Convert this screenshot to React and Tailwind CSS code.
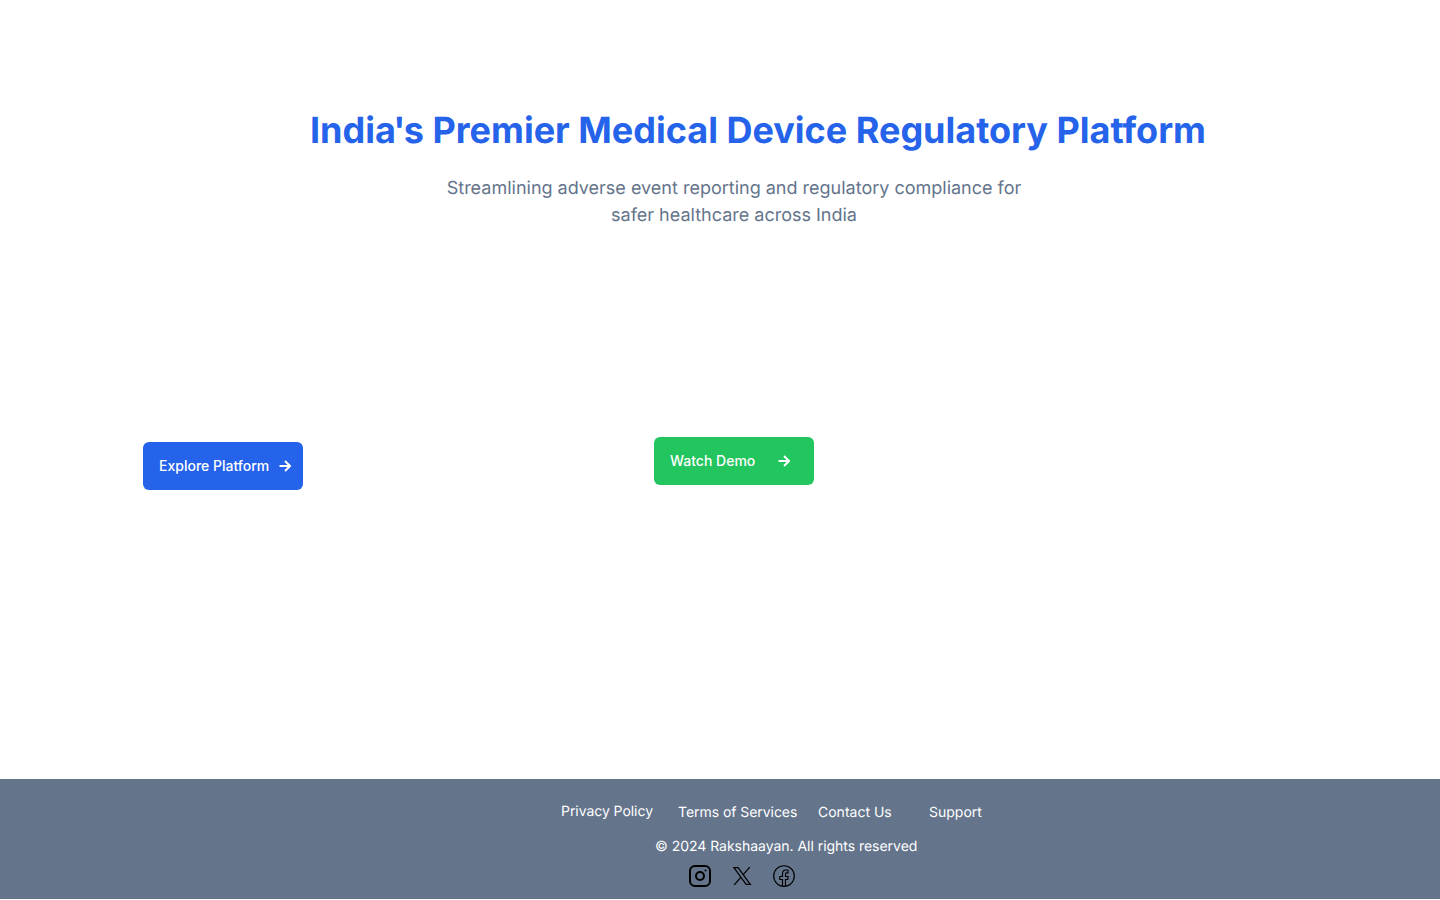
const Arrow = () => (
  <svg width="12" height="12" viewBox="0 0 12 12" fill="none" stroke="white" strokeWidth="2">
    <path d="M0.5 6H11M6 1L11 6L6 11" />
  </svg>
);

const Instagram = () => (
  <svg width="24" height="24" viewBox="0 0 24 24" fill="none" stroke="black" strokeWidth="2">
    <rect x="2" y="2" width="20" height="20" rx="5" />
    <circle cx="12" cy="12" r="4" />
    <circle cx="17.5" cy="6.5" r="1" fill="black" stroke="none" />
  </svg>
);

const XLogo = () => (
  <svg width="24" height="24" viewBox="0 0 24 24" fill="none" stroke="black" strokeWidth="1.25">
    <path d="M3.9 3.6H8.1L20.3 20.4H16.1ZM19.8 3.2L13 10.9M11 13.1L4.2 20.8" />
  </svg>
);

const Facebook = () => (
  <svg width="24" height="24" viewBox="0 0 24 24" fill="none" stroke="black" strokeWidth="1.15">
    <circle cx="12" cy="12" r="10.3" />
    <path d="M10.5 22.2V15.5H7.8V12.5H10.5V9.8C10.5 7.3 12 6 14.2 6H16V8.9H14.7C13.8 8.9 13.5 9.4 13.5 10.2V12.5H16.2L15.8 15.5H13.5V22.2" />
  </svg>
);

export default function App() {
  return (
    <div className="flex h-[900px] w-[1440px] flex-col overflow-hidden bg-white font-['Inter',sans-serif] [text-rendering:geometricPrecision]">
      <main className="h-[779px]">
        <h1 className="ml-[310px] mt-[108px] whitespace-nowrap text-[36px] leading-[45px] font-bold text-[#2563eb]">
          Indi<span className="tracking-[-1.75px]">a'</span>s Premier Medical Device Regulatory Platform
        </h1>
        <p className="ml-[434px] mt-[22px] w-[600px] text-center text-[18px] leading-[27px] text-[#64748b]">
          Streamlining adverse event reporting and regulatory compliance for safer healthcare across India
        </p>
        <div className="mt-[208px] flex items-start pl-[143px]">
          <button className="mt-[5px] flex h-12 w-40 items-center justify-between rounded-md bg-[#2563eb] pr-3 pl-4 text-[14px] font-medium text-white">
            <span className="-mt-px">Explore Platform</span>
            <Arrow />
          </button>
          <button className="ml-[351px] flex h-12 w-40 items-center justify-between rounded-md bg-[#22c55e] pr-6 pl-4 text-[14px] font-medium text-white">
            <span className="-mt-px">Watch Demo</span>
            <Arrow />
          </button>
        </div>
      </main>
      <footer className="h-[120px] bg-[#64748b] text-[14px] leading-[21px] text-white">
        <nav className="flex pt-[22px] pl-[561px] whitespace-nowrap">
          <a className="w-[117px] tracking-[-0.05px]">Privacy Policy</a>
          <a className="mt-px w-[140px] tracking-[-0.05px]">Terms of Services</a>
          <a className="mt-px w-[111px]">Contact Us</a>
          <a className="mt-px">Support</a>
        </nav>
        <p className="mt-[13px] pl-[655px] tracking-[-0.03px]">© 2024 Rakshaayan. All rights reserved</p>
        <div className="mt-[7px] flex gap-[18px] pl-[688px]">
          <Instagram />
          <XLogo />
          <Facebook />
        </div>
      </footer>
    </div>
  );
}
